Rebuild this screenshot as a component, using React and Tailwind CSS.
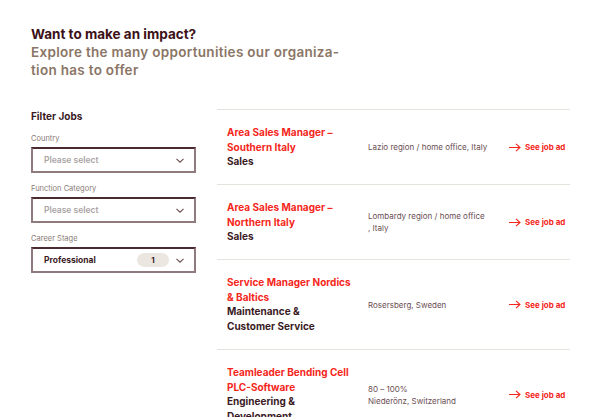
import React from "react";

const jobs = [
  {
    title: ["Area Sales Manager –", "Southern Italy"],
    category: ["Sales"],
    location: ["Lazio region / home office, Italy"],
  },
  {
    title: ["Area Sales Manager –", "Northern Italy"],
    category: ["Sales"],
    location: ["Lombardy region / home office", ", Italy"],
  },
  {
    title: ["Service Manager Nordics", "& Baltics"],
    category: ["Maintenance &", "Customer Service"],
    location: ["Rosersberg, Sweden"],
  },
  {
    title: ["Teamleader Bending Cell", "PLC-Software"],
    category: ["Engineering &", "Development"],
    location: ["80 – 100%", "Niederönz, Switzerland"],
  },
];

const filters = [
  { label: "Country", value: null },
  { label: "Function Category", value: null },
  { label: "Career Stage", value: "Professional", count: 1 },
];

function Chevron() {
  return (
    <svg width="8" height="5" viewBox="0 0 8 5" fill="none" stroke="#6b4e52" strokeWidth="1.1">
      <path d="M0.5 0.8l3.5 3.4 3.5-3.4" />
    </svg>
  );
}

function Arrow() {
  return (
    <svg width="12" height="9" viewBox="0 0 12 9" fill="none" stroke="#f5261b" strokeWidth="1.1">
      <path d="M0 4.5h11M7 0.8l4 3.7-4 3.7" />
    </svg>
  );
}

function FilterSelect({ label, value, count }) {
  return (
    <div className="mb-[11px]">
      <div className="text-[7.5px] leading-[10px] text-[#8a7a76] mb-[3px]">{label}</div>
      <div className="h-[26px] border-2 border-[#8f7a7d] border-t-[#4b2a31] flex items-center pl-[11px] pr-[10px]">
        {value ? (
          <span className="text-[8.5px] font-bold text-[#3a1a1f]">{value}</span>
        ) : (
          <span className="text-[8.5px] font-semibold text-[#a9a3a4]">Please select</span>
        )}
        <div className="ml-auto flex items-center gap-[7px]">
          {count ? (
            <span className="w-[32px] h-[14px] rounded-full bg-[#ebe7e0] text-[8px] font-bold text-[#3a1a1f] flex items-center justify-center">
              {count}
            </span>
          ) : null}
          <Chevron />
        </div>
      </div>
    </div>
  );
}

export default function App() {
  return (
    <div className="w-[600px] h-[417px] overflow-hidden bg-white font-['Inter',sans-serif]">
      <div className="pl-[31px] pt-[25px]">
        <h1 className="text-[13.5px] leading-[18px] font-bold text-[#3d1117]">
          Want to make an impact?
        </h1>
        <p className="text-[13.5px] leading-[18px] font-semibold text-[#8b7566] tracking-[0.3px]">
          Explore the many opportunities our organiza-
          <br />
          tion has to offer
        </p>
      </div>

      <div className="flex pl-[31px] pt-[30px]">
        <div className="w-[165px]">
          <div className="text-[10px] font-bold text-[#3a1a1f] mb-[10px]">Filter Jobs</div>
          {filters.map((f) => (
            <FilterSelect key={f.label} {...f} />
          ))}
        </div>

        <div className="ml-[21px] w-[353px] border-t border-[#e6e2dd]">
          {jobs.map((job, i) => (
            <div key={i} className="flex items-center border-b border-[#e6e2dd] pl-[10px] py-[15px]">
              <div className="w-[141px] text-[10px] font-bold">
                {job.title.map((t) => (
                  <div key={t} className="leading-[14.5px] text-[#f5261b]">{t}</div>
                ))}
                {job.category.map((t) => (
                  <div key={t} className="leading-[15px] text-[#3a1a1f]">{t}</div>
                ))}
              </div>
              <div className="w-[141px] text-[8px] leading-[12px] text-[#6b4e52]">
                {job.location.map((t) => (
                  <div key={t}>{t}</div>
                ))}
              </div>
              <div className="flex items-center gap-[4px] text-[8px] font-bold text-[#f5261b]">
                <Arrow />
                <span>See job ad</span>
              </div>
            </div>
          ))}
        </div>
      </div>
    </div>
  );
}
